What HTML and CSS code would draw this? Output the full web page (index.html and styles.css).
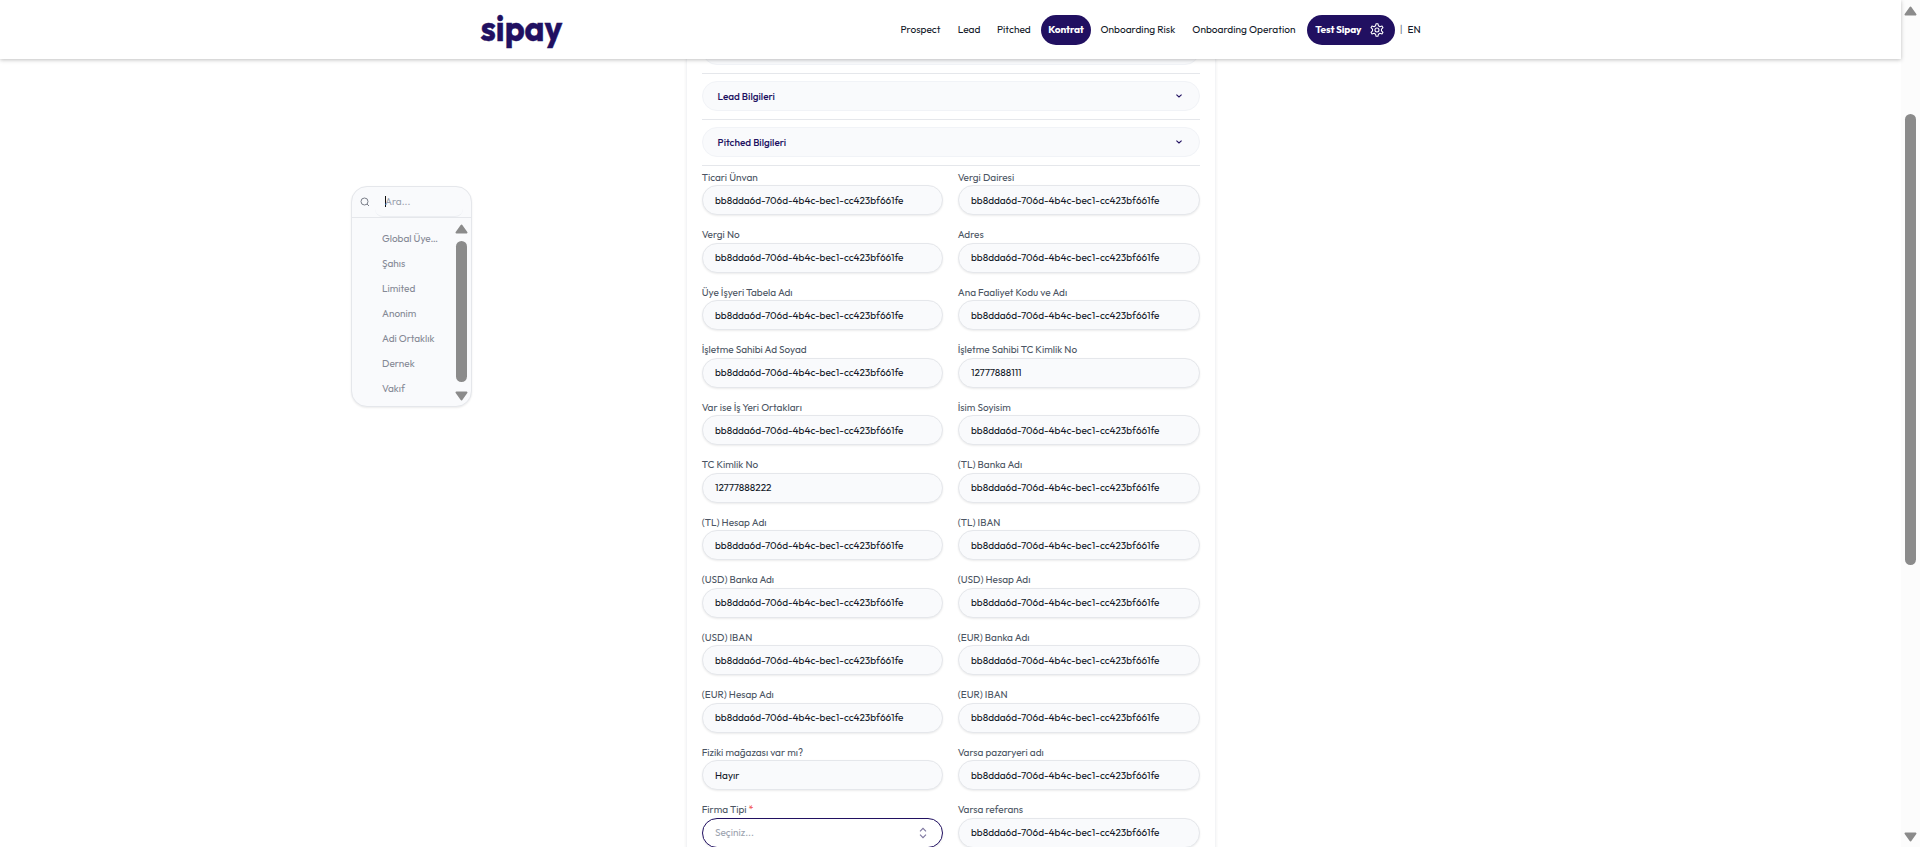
FILE: index.html
```html
<!DOCTYPE html>
<html lang="tr">
<head>
<meta charset="utf-8">
<title>Sipay</title>
<link rel="stylesheet" href="styles.css">
</head>
<body>
<div class="page">
<header class="header">
<svg class="logo" width="84" height="32" viewBox="0 0 84 32"><text class="logo-text" x="0.5" y="21.5" textLength="82" lengthAdjust="spacingAndGlyphs">sipay</text></svg>
<nav class="nav">
<a class="w-prospect">Prospect</a><a class="w-lead">Lead</a><a class="w-pitched">Pitched</a><a class="pill kontrat">Kontrat</a><a class="w-risk">Onboarding Risk</a><a class="w-operation">Onboarding Operation</a>
<a class="pill account"><span>Test Sipay</span><svg width="16" height="16" viewBox="0 0 24 24" fill="none" stroke="currentColor" stroke-width="1.6" stroke-linejoin="round"><path d="M10.6 2.5h2.8l.8 3.2 2.2 1.3 3.1-.9 1.5 2.5-2.3 2.2v2.4l2.3 2.2-1.5 2.5-3.1-.9-2.2 1.3-.8 3.2h-2.8l-.8-3.2L7.6 17l-3.1.9L3 15.4l2.3-2.2v-2.4L3 8.600l1.500-2.500 3.100.9 2.200-1.300z"/><circle cx="12" cy="12" r="3"/></svg></a>
<span class="bar">|</span><span class="lang">EN</span>
</nav>
</header>
<main class="main">
<section class="card">
<div class="accordion clipped"></div>
<hr class="rule">
<div class="accordion"><span>Lead Bilgileri</span><svg width="8" height="8" viewBox="0 0 8 8" fill="none" stroke="currentColor" stroke-width="1.1"><path d="M1.4 2.6L4 5l2.6-2.4"/></svg></div>
<hr class="rule">
<div class="accordion"><span>Pitched Bilgileri</span><svg width="8" height="8" viewBox="0 0 8 8" fill="none" stroke="currentColor" stroke-width="1.1"><path d="M1.4 2.6L4 5l2.6-2.4"/></svg></div>
<hr class="rule">
<div class="fields">
<div class="field"><label>Ticari Ünvan</label><div class="input">bb8dda6d-706d-4b4c-bec1-cc423bf661fe</div></div>
<div class="field"><label>Vergi Dairesi</label><div class="input">bb8dda6d-706d-4b4c-bec1-cc423bf661fe</div></div>
<div class="field"><label>Vergi No</label><div class="input">bb8dda6d-706d-4b4c-bec1-cc423bf661fe</div></div>
<div class="field"><label>Adres</label><div class="input">bb8dda6d-706d-4b4c-bec1-cc423bf661fe</div></div>
<div class="field"><label>Üye İşyeri Tabela Adı</label><div class="input">bb8dda6d-706d-4b4c-bec1-cc423bf661fe</div></div>
<div class="field"><label>Ana Faaliyet Kodu ve Adı</label><div class="input">bb8dda6d-706d-4b4c-bec1-cc423bf661fe</div></div>
<div class="field"><label>İşletme Sahibi Ad Soyad</label><div class="input">bb8dda6d-706d-4b4c-bec1-cc423bf661fe</div></div>
<div class="field"><label>İşletme Sahibi TC Kimlik No</label><div class="input">12777888111</div></div>
<div class="field"><label>Var ise İş Yeri Ortakları</label><div class="input">bb8dda6d-706d-4b4c-bec1-cc423bf661fe</div></div>
<div class="field"><label>İsim Soyisim</label><div class="input">bb8dda6d-706d-4b4c-bec1-cc423bf661fe</div></div>
<div class="field"><label>TC Kimlik No</label><div class="input">12777888222</div></div>
<div class="field"><label>(TL) Banka Adı</label><div class="input">bb8dda6d-706d-4b4c-bec1-cc423bf661fe</div></div>
<div class="field"><label>(TL) Hesap Adı</label><div class="input">bb8dda6d-706d-4b4c-bec1-cc423bf661fe</div></div>
<div class="field"><label>(TL) IBAN</label><div class="input">bb8dda6d-706d-4b4c-bec1-cc423bf661fe</div></div>
<div class="field"><label>(USD) Banka Adı</label><div class="input">bb8dda6d-706d-4b4c-bec1-cc423bf661fe</div></div>
<div class="field"><label>(USD) Hesap Adı</label><div class="input">bb8dda6d-706d-4b4c-bec1-cc423bf661fe</div></div>
<div class="field"><label>(USD) IBAN</label><div class="input">bb8dda6d-706d-4b4c-bec1-cc423bf661fe</div></div>
<div class="field"><label>(EUR) Banka Adı</label><div class="input">bb8dda6d-706d-4b4c-bec1-cc423bf661fe</div></div>
<div class="field"><label>(EUR) Hesap Adı</label><div class="input">bb8dda6d-706d-4b4c-bec1-cc423bf661fe</div></div>
<div class="field"><label>(EUR) IBAN</label><div class="input">bb8dda6d-706d-4b4c-bec1-cc423bf661fe</div></div>
<div class="field"><label>Fiziki mağazası var mı?</label><div class="input">Hayır</div></div>
<div class="field"><label>Varsa pazaryeri adı</label><div class="input">bb8dda6d-706d-4b4c-bec1-cc423bf661fe</div></div>
<div class="field"><label>Firma Tipi <span class="required">*</span></label><div class="input select"><span>Seçiniz...</span><svg width="8" height="12" viewBox="0 0 8 12" fill="none" stroke="currentColor" stroke-width="1.1"><path d="M1 4.3L4 1.3l3 3M1 7.7l3 3 3-3"/></svg></div></div>
<div class="field"><label>Varsa referans</label><div class="input">bb8dda6d-706d-4b4c-bec1-cc423bf661fe</div></div>
</div>
</section>
</main>
</div>
<div class="scrollbar">
<svg width="13" height="10" viewBox="0 0 13 10"><path d="M6.5 1.5L11.5 8.5h-10z"/></svg>
<div class="thumb"></div>
<svg class="down" width="13" height="10" viewBox="0 0 13 10"><path d="M6.5 8.5L11.5 1.5h-10z"/></svg>
</div>
<div class="dropdown">
<div class="search"><svg width="10" height="10" viewBox="0 0 10 10" fill="none" stroke="currentColor" stroke-width="1"><circle cx="4.5" cy="4.5" r="3.5"/><path d="M7 7l2 2"/></svg><div class="search-input"><i class="caret"></i><span>Ara...</span></div></div>
<div class="list">
<ul class="options"><li>Global Üye…</li><li>Şahıs</li><li>Limited</li><li>Anonim</li><li>Adi Ortaklık</li><li>Dernek</li><li>Vakıf</li></ul>
<div class="list-scroll">
<svg width="13" height="10" viewBox="0 0 13 10"><path d="M6.5 1.5L11.5 8.5h-10z"/></svg>
<div class="list-thumb"></div>
<svg width="13" height="10" viewBox="0 0 13 10"><path d="M6.5 8.5L11.5 1.5h-10z"/></svg>
</div>
</div>
</div>
</body>
</html>
```
FILE: styles.css
```css
* { box-sizing: border-box; }
body {
  margin: 0;
  height: 847px;
  display: flex;
  overflow: hidden;
  background: #fff;
  color: #111827;
  font-family: Outfit, Lato, "Open Sans", sans-serif;
  font-size: 10px;
}
.page { width: 1901px; height: 847px; display: flex; flex-direction: column; }
.header {
  position: relative;
  z-index: 2;
  flex: none;
  height: 59px;
  padding-left: 480px;
  display: flex;
  align-items: center;
  background: #fff;
  box-shadow: 0 1px 4px rgba(0, 0, 0, .25);
}
.logo { margin-top: 10px; width: 84px; flex: none; overflow: visible; }
.logo-text { font: 700 35px Outfit, Lato, sans-serif; fill: #211061; stroke: #211061; stroke-width: .4; }
.nav { display: flex; align-items: center; margin-left: 336.4px; height: 30px; white-space: nowrap; font-size: 10.15px; }
.nav a { flex: none; }
.w-prospect { width: 57.4px; }
.w-lead { width: 39.2px; }
.w-pitched { width: 44px; }
.w-risk { width: 91.9px; }
.w-operation { width: 114.5px; }
.pill { height: 30px; border-radius: 15px; background: #211061; color: #fff; font-weight: 700; display: flex; align-items: center; letter-spacing: -.15px; }
.kontrat { width: 50px; justify-content: center; margin-right: 9.5px; }
.account { width: 88px; padding: 0 10px 0 8.5px; justify-content: space-between; }
.bar { margin-left: 5px; width: 7.6px; color: #6b7280; }
.main { flex: 1; overflow: hidden; display: flex; padding-left: 686px; }
.card { width: 530px; height: 900px; flex: none; padding: 0 15px; border: solid #f3f4f6; border-width: 0 1px; box-shadow: 0 0 3px rgba(0, 0, 0, .07); }
.accordion {
  height: 30px;
  border: 1px solid #f1f3f7;
  border-radius: 15px;
  background: #f9fafc;
  padding: 0 16px 0 14.6px;
  display: flex;
  align-items: center;
  justify-content: space-between;
  font-weight: 500;
  color: #211061;
}
.clipped { margin-top: -24px; }
.rule { margin: 8px 0 7px; border: 0; height: 1px; background: #e5e7eb; }
.fields { display: grid; grid-template-columns: 241px 1fr; column-gap: 15px; grid-auto-rows: 57.5px; margin-top: -2.2px; }
.field { display: flex; flex-direction: column; }
label { height: 14.5px; line-height: 14px; margin-left: -.3px; color: #4b5563; white-space: nowrap; }
.required { color: #ef4444; }
.input {
  height: 30px;
  padding: 0 12px .4px;
  border: 1px solid #e5e7eb;
  border-radius: 15px;
  background: #f9fafc;
  box-shadow: 0 1px 2px rgba(0, 0, 0, .08);
  display: flex;
  align-items: center;
  white-space: nowrap;
}
.select { border-color: #211061; background: #fff; justify-content: space-between; padding-right: 15px; color: #9ca3af; }
.select svg { color: #7d769f; }
.scrollbar { width: 19px; height: 847px; background: #fcfcfc; display: flex; flex-direction: column; align-items: center; padding: 6px 0 5px; }
.scrollbar svg, .list-scroll svg { fill: #8b8b8b; stroke: #8b8b8b; stroke-width: 2; stroke-linejoin: round; flex: none; }
.thumb { width: 11px; height: 451px; margin-top: 98px; border-radius: 6px; background: #8b8b8b; }
.down { margin-top: auto; }
.dropdown {
  position: absolute;
  left: 351px;
  top: 186px;
  width: 121px;
  height: 221px;
  border: 1px solid #e5e7eb;
  border-radius: 16px;
  background: #f9fafc;
  box-shadow: 0 1px 2px rgba(0, 0, 0, .08);
  color: #858995;
  overflow: hidden;
}
.search { height: 31px; border-bottom: 1px solid #e5e7eb; display: flex; align-items: center; padding-left: 8px; color: #7b7f8a; }
.search-input { width: 88px; height: 30px; margin-left: 5px; padding-left: 10px; border-bottom: 1px solid #eceef2; border-radius: 8px; display: flex; align-items: center; color: #9ca3af; }
.caret { width: 1px; height: 11px; background: #111; margin-right: -1px; }
.list { display: flex; justify-content: space-between; padding: 6px 3px 0 30px; }
.options { list-style: none; margin: 2px 0 0; padding: 0; line-height: 25px; white-space: nowrap; }
.list-scroll { width: 13px; display: flex; flex-direction: column; align-items: center; }
.list-thumb { width: 11px; height: 141px; margin: 7px 0 9px; border-radius: 6px; background: #8b8b8b; }
```
